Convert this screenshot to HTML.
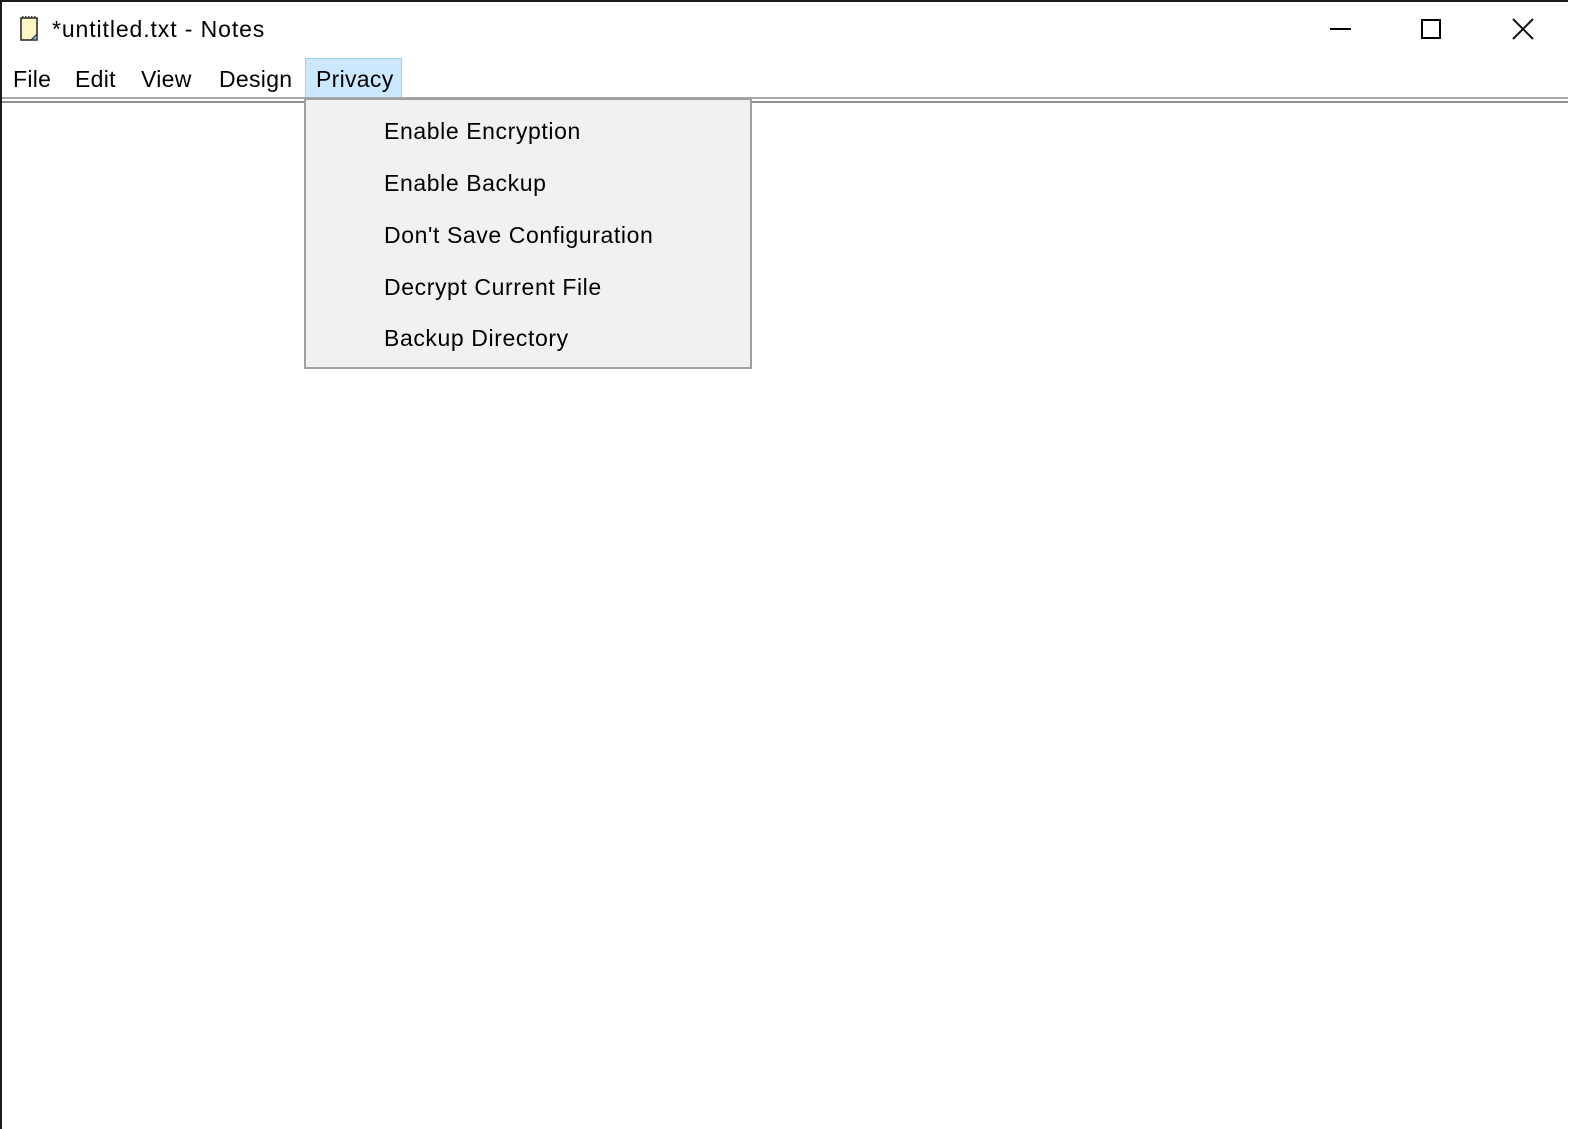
<!DOCTYPE html>
<html><head><style>
body{margin:0;width:1574px;height:1129px;background:#fff;position:relative;overflow:hidden;font-family:"Liberation Sans","DejaVu Sans",sans-serif;color:#000}
.a{position:absolute}
.t{font-size:22px;white-space:nowrap}
.m{font-size:23px;letter-spacing:0.6px}
</style></head><body>
<div class="a" style="left:0;top:0;width:1568px;height:2px;background:#1a1a1a"></div>
<div class="a" style="left:0;top:0;width:2px;height:1129px;background:#1a1a1a"></div>
<svg class="a" style="left:18px;top:14px" width="24" height="30" viewBox="0 0 24 30">
<rect x="3" y="4" width="16" height="22" fill="#fbf7c4" stroke="#222" stroke-width="1.5"/>
<path d="M4 3 h14" stroke="#444" stroke-width="2" stroke-dasharray="1.5 1.5"/>
<path d="M13 26 L19 20 L19 26 Z" fill="#7ab3e0" stroke="#222" stroke-width="1"/>
</svg>
<div class="a t m" style="left:52px;top:16px;letter-spacing:0.9px">*untitled.txt - Notes</div>
<div class="a" style="left:1330px;top:28px;width:21px;height:2px;background:#000"></div>
<div class="a" style="left:1421px;top:19px;width:16px;height:16px;border:2px solid #000"></div>
<svg class="a" style="left:1512px;top:18px" width="22" height="22"><path d="M1 1L21 21M21 1L1 21" stroke="#111" stroke-width="2"/></svg>
<div class="a t m" style="left:13px;top:66px;letter-spacing:0.3px">File</div>
<div class="a t m" style="left:75px;top:66px;letter-spacing:0.3px">Edit</div>
<div class="a t m" style="left:141px;top:66px;letter-spacing:0.3px">View</div>
<div class="a t m" style="left:219px;top:66px;letter-spacing:0.3px">Design</div>
<div class="a" style="left:305px;top:58px;width:95px;height:39px;background:#cce8ff;border:1px solid #99d1ff"></div>
<div class="a t m" style="left:316px;top:66px;letter-spacing:0.3px">Privacy</div>
<div class="a" style="left:2px;top:97px;width:1566px;height:2px;background:#a9a9a9"></div>
<div class="a" style="left:2px;top:101px;width:1566px;height:2px;background:#8f8f95"></div>
<div class="a" style="left:304px;top:98px;width:444px;height:267px;background:#f1f1f1;border:2px solid #a0a0a0"></div>
<div class="a t m" style="left:384px;top:118px">Enable Encryption</div>
<div class="a t m" style="left:384px;top:170px">Enable Backup</div>
<div class="a t m" style="left:384px;top:222px">Don't Save Configuration</div>
<div class="a t m" style="left:384px;top:274px">Decrypt Current File</div>
<div class="a t m" style="left:384px;top:325px">Backup Directory</div>
</body></html>
